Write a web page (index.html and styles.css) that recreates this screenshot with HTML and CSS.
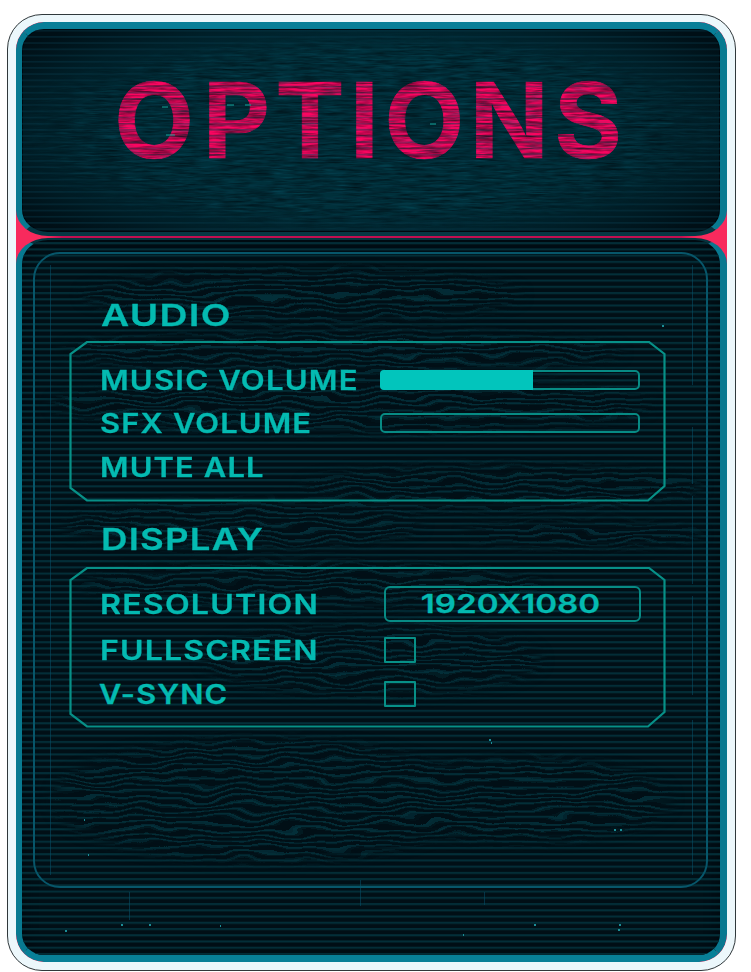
FILE: index.html
```html
<!DOCTYPE html>
<html lang="en">
<head>
<meta charset="utf-8">
<title>Options</title>
<link rel="stylesheet" href="styles.css">
</head>
<body>
<main class="card">
  <div class="frame">
    <header class="panel header">
      <h1 class="title"><span>O</span>PTIONS</h1>
      <svg class="texture" width="699" height="203" aria-hidden="true">
        <defs>
          <filter id="grain" x="0" y="0" width="100%" height="100%" color-interpolation-filters="sRGB">
            <feTurbulence type="fractalNoise" baseFrequency="0.04 0.45" numOctaves="3" seed="4"/>
            <feColorMatrix values="0 0 0 0 0  0 0 0 0 0.04  0 0 0 0 0.06  1.3 0 0 0 -0.46"/>
          </filter>
          <filter id="glint" x="0" y="0" width="100%" height="100%" color-interpolation-filters="sRGB">
            <feTurbulence type="fractalNoise" baseFrequency="0.04 0.5" numOctaves="2" seed="19"/>
            <feColorMatrix values="0 0 0 0 0.04  0 0 0 0 0.42  0 0 0 0 0.5  0 3 0 0 -1.62"/>
          </filter>
          <radialGradient id="glow"><stop offset=".75" stop-color="#fff"/><stop offset="1" stop-color="#000"/></radialGradient>
          <mask id="center"><ellipse cx="350" cy="104" rx="375" ry="104" fill="url(#glow)"/></mask>
          <pattern id="scan" width="8" height="6.2" patternUnits="userSpaceOnUse"><rect y="1" width="8" height="1.4" fill="#08394a"/></pattern>
        </defs>
        <rect width="699" height="203" fill="url(#scan)" opacity=".5"/>
        <g mask="url(#center)">
          <rect width="699" height="203" filter="url(#grain)"/>
          <rect width="699" height="203" filter="url(#glint)" opacity=".3"/>
        </g>
        <path d="M140 78h6M144 106h9M205 76h7M223 76h6M408 95h6" stroke="#14a79c"/>
      </svg>
    </header>

    <section class="panel body">
      <svg class="texture" width="699" height="717" aria-hidden="true">
        <defs>
          <pattern id="lines" y="1.2" width="8" height="6.235" patternUnits="userSpaceOnUse"><rect y="1" width="8" height="2" fill="#032f39"/></pattern>
          <filter id="wave" filterUnits="userSpaceOnUse" x="0" y="0" width="699" height="717" color-interpolation-filters="sRGB">
            <feTurbulence type="fractalNoise" baseFrequency="0.02 0.05" numOctaves="2" seed="8" result="n"/>
            <feColorMatrix in="n" values="0 0 0 0 0.5  0 1 0 0 0  0 0 0 0 0  0 0 0 0 1" result="m"/>
            <feDisplacementMap in="SourceGraphic" in2="m" scale="18" xChannelSelector="R" yChannelSelector="G"/>
          </filter>
          <filter id="soft"><feGaussianBlur stdDeviation="6"/></filter>
          <mask id="grainAreas">
            <g fill="#fff" filter="url(#soft)">
              <ellipse cx="280" cy="55" rx="220" ry="26"/><ellipse cx="320" cy="112" rx="280" ry="22"/>
              <ellipse cx="330" cy="165" rx="300" ry="28"/><ellipse cx="480" cy="247" rx="200" ry="22"/>
              <ellipse cx="220" cy="285" rx="180" ry="24"/><ellipse cx="560" cy="295" rx="120" ry="12"/>
              <ellipse cx="290" cy="345" rx="230" ry="22"/><ellipse cx="350" cy="420" rx="170" ry="36"/>
              <ellipse cx="240" cy="560" rx="210" ry="62"/><ellipse cx="500" cy="560" rx="150" ry="42"/>
            </g>
          </mask>
        </defs>
        <rect width="699" height="717" fill="url(#lines)"/>
        <g mask="url(#grainAreas)">
          <rect width="699" height="717" fill="#010f16"/>
          <rect width="699" height="717" fill="url(#lines)" filter="url(#wave)"/>
        </g>
        <path d="M28.500 25V635M670.500 25V145M670.500 187V244M670.500 256V344M670.500 356V455M670.500 480V635M107.500 652V680M338.500 640V666M462.500 652V665" stroke="#07506a" stroke-width="1" opacity=".55" fill="none"/>
        <path d="M99 685h2M127 685h2M43 691h2M198 686h1M512 685h2M597 685h2M596 690h2M62 580h1M66 615h1M592 590h2M598 590h2M467 500h2M469 503h1M640 86h2M441 695h1" stroke="#1c8d96" stroke-width="2"/>
      </svg>

      <div class="content">
        <h2 class="heading"><span class="w-audio">AUDIO</span></h2>
        <div class="group">
          <svg class="outline" viewBox="0 0 597 161" aria-hidden="true"><path d="M18 1H580L595.500 13V145L579 159.500H18L1.500 147V13Z"/></svg>
          <div class="row"><span class="label w-music">MUSIC VOLUME</span><div class="bar music"><div class="fill"></div></div></div>
          <div class="row"><span class="label w-sfx">SFX VOLUME</span><div class="bar"></div></div>
          <div class="row"><span class="label w-mute">MUTE ALL</span></div>
        </div>
        <h2 class="heading second"><span class="w-display">DISPLAY</span></h2>
        <div class="group display">
          <svg class="outline" viewBox="0 0 597 161" aria-hidden="true"><path d="M18 1H580L595.500 13V145L579 159.500H18L1.500 147V13Z"/></svg>
          <div class="row res"><span class="label w-res">RESOLUTION</span><div class="select"><span class="w-value">1920X1080</span></div></div>
          <div class="row full"><span class="label w-full">FULLSCREEN</span><div class="check"></div></div>
          <div class="row"><span class="label w-sync">V-SYNC</span><div class="check"></div></div>
        </div>
      </div>
    </section>
  </div>
</main>
</body>
</html>
```
FILE: styles.css
```css
* { box-sizing: border-box; }
body { margin: 0; padding: 14px 0 0 7px; height: 972px; overflow: hidden; background: #fff; font-family: Inter, "Liberation Sans", sans-serif; }
.card { width: 729px; height: 957px; padding: 7px 8px 8px; border: 1px solid #30383b; border-radius: 35px; background: #ecf7fb; }
.frame { display: flex; flex-direction: column; gap: 2px; width: 711px; height: 940px; overflow: hidden; border-radius: 28px; background: linear-gradient(90deg, #f82a5d 30px, #c10e51 46px, #c10e51 665px, #f82a5d 681px); }
.panel { position: relative; border: 6px solid #087b93; box-shadow: inset 0 0 0 1px #00080e; }
.header { height: 214px; overflow: hidden; border-width: 7px 7px 4px 6px; border-color: #087f98 #087a91 #053743 #087a91; border-radius: 28px 28px 32px 32px / 28px 28px 26px 26px; background: radial-gradient(ellipse 62% 70% at 50% 50%, #00303b 0 55%, #001e27 80%, #000f16 100%); }
.body { height: 724px; overflow: hidden; border-width: 2px 7px 7px 6px; border-color: #06333e #087890 #087f97 #087a91; border-radius: 32px 32px 28px 28px / 26px 26px 28px 28px; background: #010f16; box-shadow: inset 0 0 12px 3px #000910; }
.texture { position: absolute; left: 0; top: 0; display: block; }
.title { margin: 0; padding: 39px 0 0 92px; font-size: 104px; line-height: 104px; font-weight: 700; letter-spacing: 5.200px; color: #fa0560; white-space: nowrap; -webkit-text-stroke: .7px #fa0560; }
.title span { letter-spacing: 8.500px; }
.content { position: relative; width: 675px; height: 636px; margin: 12px 0 0 11px; padding: 44px 0 0 34px; border: 2px solid #07566a; border-radius: 27px; }
.heading { height: 43px; margin: 0; padding: 0 0 0 32px; font-size: 30px; line-height: 34px; font-weight: 600; letter-spacing: 1px; color: #04bab1; -webkit-text-stroke: .3px #04bab1; }
.heading.second { height: 65px; padding-top: 20px; }
.heading span, .label, .select span { display: inline-block; transform-origin: 0 50%; white-space: nowrap; }
.w-audio { transform: scaleX(1.29); }
.w-display { transform: scaleX(1.22); }
.w-music { transform: scaleX(1.174); }
.w-sfx { transform: scaleX(1.165); }
.w-mute { transform: scaleX(1.165); }
.w-res { transform: scaleX(1.212); }
.w-full { transform: scaleX(1.206); }
.w-sync { transform: translateX(-1px) scaleX(1.155); }
.group { position: relative; width: 597px; height: 161px; padding: 17px 0 0 31px; }
.outline { position: absolute; inset: 0; fill: none; stroke: #079087; stroke-width: 2.2; }
.row { position: relative; display: flex; align-items: center; height: 43.500px; }
.label { width: 280px; font-size: 26.500px; font-weight: 600; letter-spacing: 1px; color: #04bab1; -webkit-text-stroke: .3px #04bab1; }
.bar { width: 260px; height: 20px; border: 2px solid #078b84; border-radius: 5px; }
.fill { width: 153px; height: 20px; margin: -2px; border-radius: 4px 0 0 4px; background: #02c5bc; }
.select { display: flex; justify-content: center; align-items: center; width: 257px; height: 36px; margin-left: 4px; border: 2px solid #078b84; border-radius: 6px; font-size: 25.500px; font-weight: 600; color: #04bab1; -webkit-text-stroke: .3px #04bab1; }
.select .w-value { transform-origin: 50% 50%; transform: translate(-2.500px, -1px) scaleX(1.3); }
.check { width: 32px; height: 26px; margin-left: 4px; border: 2px solid #079087; border-radius: 1px; }
.display { padding-top: 14px; }
.res { height: 46px; }
.full { height: 45px; }
```
